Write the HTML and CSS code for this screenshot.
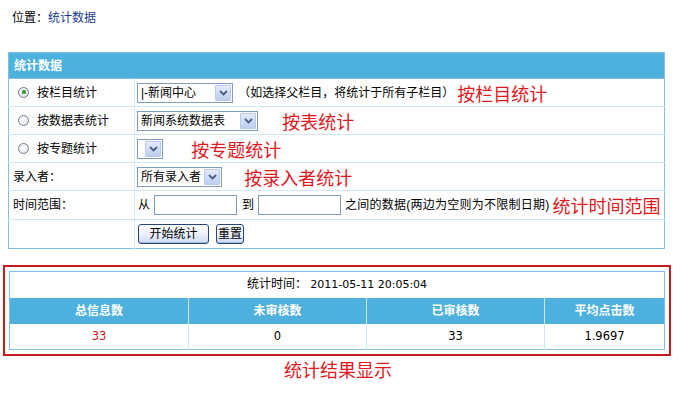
FILE: index.html
```html
<!DOCTYPE html>
<html lang="zh-CN">
<head>
<meta charset="utf-8">
<title>统计数据</title>
<link rel="stylesheet" href="styles.css">
</head>
<body>
<div class="crumb">位置：<span class="crumb-link">统计数据</span></div>

<table class="form">
  <colgroup><col class="col-lbl"><col class="col-fld"></colgroup>
  <tr><th colspan="2" class="form-title">统计数据</th></tr>
  <tr>
    <td class="lbl"><span class="radio on"></span>按栏目统计</td>
    <td class="fld">
      <span class="sel sel-1"><span class="sel-text">|-新闻中心</span><span class="arr"><svg viewBox="0 0 9 6" width="9" height="6"><path d="M1 1 L4.5 4.5 L8 1" fill="none" stroke="#4a5d86" stroke-width="1.8"/></svg></span></span>
      <span class="hint">（如选择父栏目，将统计于所有子栏目）</span><span class="note note-1">按栏目统计</span>
    </td>
  </tr>
  <tr>
    <td class="lbl"><span class="radio"></span>按数据表统计</td>
    <td class="fld">
      <span class="sel sel-2"><span class="sel-text">新闻系统数据表</span><span class="arr"><svg viewBox="0 0 9 6" width="9" height="6"><path d="M1 1 L4.5 4.5 L8 1" fill="none" stroke="#4a5d86" stroke-width="1.8"/></svg></span></span>
      <span class="note note-2">按表统计</span>
    </td>
  </tr>
  <tr>
    <td class="lbl"><span class="radio"></span>按专题统计</td>
    <td class="fld">
      <span class="sel sel-3"><span class="sel-text"></span><span class="arr"><svg viewBox="0 0 9 6" width="9" height="6"><path d="M1 1 L4.5 4.5 L8 1" fill="none" stroke="#4a5d86" stroke-width="1.8"/></svg></span></span>
      <span class="note note-3">按专题统计</span>
    </td>
  </tr>
  <tr>
    <td class="lbl lbl-plain">录入者：</td>
    <td class="fld">
      <span class="sel sel-4"><span class="sel-text">所有录入者</span><span class="arr"><svg viewBox="0 0 9 6" width="9" height="6"><path d="M1 1 L4.5 4.5 L8 1" fill="none" stroke="#4a5d86" stroke-width="1.8"/></svg></span></span>
      <span class="note note-4">按录入者统计</span>
    </td>
  </tr>
  <tr class="row-tall">
    <td class="lbl lbl-plain">时间范围：</td>
    <td class="fld">
      <span class="word">从</span><span class="txt"></span><span class="word word-2">到</span><span class="txt"></span><span class="hint hint-2">之间的数据(两边为空则为不限制日期)</span><span class="note note-5">统计时间范围</span>
    </td>
  </tr>
  <tr class="row-tall">
    <td class="lbl"></td>
    <td class="fld">
      <span class="btn btn-go">开始统计</span><span class="btn btn-reset">重置</span>
    </td>
  </tr>
</table>

<div class="result">
  <table class="res">
    <colgroup><col class="c1"><col class="c2"><col class="c3"><col class="c4"></colgroup>
    <tr><td colspan="4" class="res-time">统计时间：&nbsp;<span class="num">2011-05-11 20:05:04</span></td></tr>
    <tr class="res-head">
      <th>总信息数</th><th>未审核数</th><th>已审核数</th><th>平均点击数</th>
    </tr>
    <tr class="res-data">
      <td class="hot">33</td><td>0</td><td>33</td><td>1.9697</td>
    </tr>
  </table>
</div>
<div class="caption">统计结果显示</div>
</body>
</html>
```

FILE: styles.css
```css
* { box-sizing: border-box; }

body {
  margin: 0;
  background: #fff;
  color: #000;
  font: 12px/14px "Liberation Sans", "Noto Sans CJK SC", sans-serif;
}

.crumb {
  padding: 11px 0 0 12px;
  height: 25px;
  line-height: 14px;
}
.crumb-link { color: #1b3b8c; }

/* ---------- form table ---------- */
.form {
  margin: 27px 0 0 8px;
  width: 656px;
  border-collapse: collapse;
  border: 1px solid #7fc1e4;
  table-layout: fixed;
}
.col-lbl { width: 126px; }
.col-fld { width: 530px; }
.form-title {
  height: 26px;
  padding: 0 0 0 5px;
  background: #4eb0dc;
  color: #fff;
  font-weight: bold;
  text-align: left;
  border-bottom: 1px solid #7fc1e4;
}
.form td {
  height: 28px;
  padding: 0;
  border-top: 1px solid #cfe7f4;
  vertical-align: middle;
  white-space: nowrap;
  overflow: visible;
}
.form .row-tall td { height: 29px; }
.lbl {
  padding-left: 4px !important;
  border-right: 1px solid #d7ecf6;
}
.fld { padding-left: 2px !important; }

.radio {
  display: inline-block;
  width: 11px;
  height: 11px;
  margin: 0 8px 0 5px;
  vertical-align: -1px;
  border: 1px solid #6f7f99;
  border-radius: 50%;
  background: radial-gradient(circle at 40% 40%, #ffffff 0, #eef0f4 55%, #d3d7e0 100%);
  position: relative;
}
.radio.on::after {
  content: "";
  position: absolute;
  left: 2.5px;
  top: 2.5px;
  width: 4px;
  height: 4px;
  border-radius: 50%;
  background: #3a9a2a;
  box-shadow: 0 0 1px #7ed16a;
}

.sel {
  display: inline-flex;
  align-items: center;
  justify-content: space-between;
  height: 20px;
  vertical-align: middle;
  border: 1px solid #7f9db9;
  background: #fff;
  padding: 0 1px 0 3px;
}
.sel-text { line-height: 16px; }
.sel-1 { width: 96px; }
.sel-2 { width: 121px; }
.sel-3 { width: 26px; }
.sel-4 { width: 85px; }
.arr {
  display: inline-flex;
  align-items: center;
  justify-content: center;
  width: 16px;
  height: 16px;
  border: 1px solid #b7c9ec;
  border-radius: 1px;
  background: linear-gradient(#e4ebfa, #bccdf0);
}

.hint { margin-left: 2px; vertical-align: middle; }
.hint-2 { margin-left: 4px; letter-spacing: 0.25px; }

.note {
  color: #e0191f;
  font-size: 18px;
  line-height: 20px;
  vertical-align: middle;
  font-family: "Noto Sans CJK SC", sans-serif;
}
.note-1 { margin-left: 3px; }
.note-2 { margin-left: 21px; }
.note-3 { margin-left: 25px; }
.note-4 { margin-left: 19px; }
.note-5 { margin-left: 3px; }

.word { margin-left: 1px; vertical-align: middle; }
.word-2 { margin-left: 5px; }
.txt {
  display: inline-block;
  width: 83px;
  height: 20px;
  margin-left: 4px;
  vertical-align: middle;
  border: 1px solid #7f9db9;
  background: #fff;
}

.btn {
  display: inline-block;
  height: 20px;
  line-height: 18px;
  padding: 0 9px;
  vertical-align: middle;
  border: 1px solid #25467f;
  border-radius: 3px;
  background: linear-gradient(#fdfdff 0%, #eef2fb 45%, #cfdcf3 100%);
  box-shadow: inset 0 -1px 0 #a9bde3;
  color: #000;
}
.btn-go { margin-left: 1px; width: 71px; text-align: center; }
.btn-reset { margin-left: 7px; width: 28px; padding: 0; text-align: center; }

/* ---------- result ---------- */
.result {
  margin: 16px 0 0 3px;
  width: 668px;
  border: 2px solid #c91a1e;
  padding: 4px 5px 4px 4px;
}
.res {
  width: 655px;
  border-collapse: collapse;
  border: 1px solid #7fc1e4;
  table-layout: fixed;
}
.c1 { width: 179px; }
.c2 { width: 178px; }
.c3 { width: 178px; }
.c4 { width: 120px; }
.res td, .res th {
  padding: 0;
  text-align: center;
  vertical-align: middle;
}
.res-time { height: 26px; }
.num { font-family: "DejaVu Sans", sans-serif; font-size: 11px; }
.res-head th {
  height: 26px;
  background: #4eb0dc;
  color: #fff;
  font-weight: bold;
  border-left: 1px solid #c9e7f5;
}
.res-head th:first-child { border-left: 0; }
.res-data td {
  height: 26px;
  font-family: "DejaVu Sans", sans-serif;
  font-size: 11.5px;
  border-left: 1px solid #c9e7f5;
}
.res-data td:first-child { border-left: 0; }
.res-data .hot { color: #c8161d; }

.caption {
  margin-top: 2px;
  width: 676px;
  text-align: center;
  color: #e0191f;
  font-size: 18px;
  line-height: 22px;
  font-family: "Noto Sans CJK SC", sans-serif;
}
```
